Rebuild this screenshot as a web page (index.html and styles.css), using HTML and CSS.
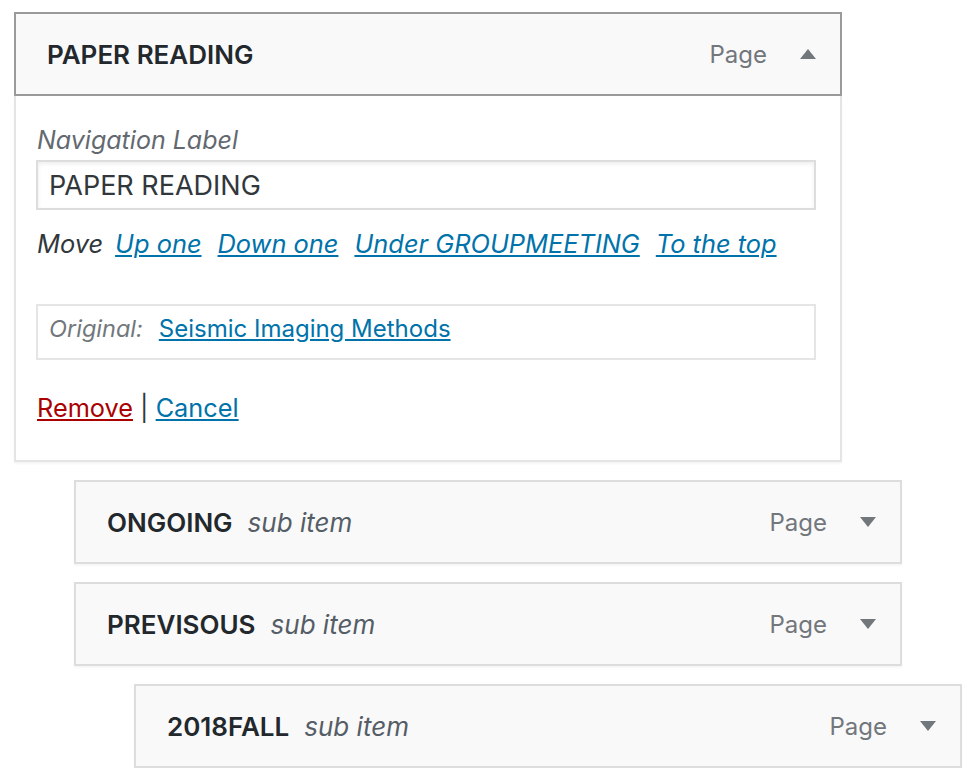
FILE: index.html
```html
<!DOCTYPE html>
<html lang="en">
<head>
<meta charset="utf-8">
<title>Menu structure</title>
<link rel="stylesheet" href="styles.css">
</head>
<body>
<ul class="menu">
  <li class="menu-item depth-0 is-open">
    <div class="item-bar">
      <span class="item-title"><span class="title">PAPER READING</span></span>
      <span class="item-controls">
        <span class="item-type">Page</span>
        <svg class="toggle" width="16" height="10" viewBox="0 0 16 10"><polygon points="0,10 16,10 8,0"/></svg>
      </span>
    </div>
    <div class="settings">
      <label class="field-label">Navigation Label</label>
      <div class="input">PAPER READING</div>
      <p class="field-move">
        <span class="move-label">Move</span>
        <a href="#">Up one</a>
        <a href="#">Down one</a>
        <a href="#">Under GROUPMEETING</a>
        <a href="#">To the top</a>
      </p>
      <div class="original">
        <span class="original-label">Original:</span>
        <a href="#">Seismic Imaging Methods</a>
      </div>
      <p class="actions"><a href="#" class="remove">Remove</a> <span class="sep">|</span> <a href="#">Cancel</a></p>
    </div>
  </li>
  <li class="menu-item depth-1">
    <div class="item-bar light">
      <span class="item-title"><span class="title">ONGOING</span><span class="sub">sub item</span></span>
      <span class="item-controls">
        <span class="item-type">Page</span>
        <svg class="toggle" width="16" height="10" viewBox="0 0 16 10"><polygon points="0,0 16,0 8,10"/></svg>
      </span>
    </div>
  </li>
  <li class="menu-item depth-1">
    <div class="item-bar light">
      <span class="item-title"><span class="title">PREVISOUS</span><span class="sub">sub item</span></span>
      <span class="item-controls">
        <span class="item-type">Page</span>
        <svg class="toggle" width="16" height="10" viewBox="0 0 16 10"><polygon points="0,0 16,0 8,10"/></svg>
      </span>
    </div>
  </li>
  <li class="menu-item depth-2">
    <div class="item-bar light">
      <span class="item-title"><span class="title">2018FALL</span><span class="sub">sub item</span></span>
      <span class="item-controls">
        <span class="item-type">Page</span>
        <svg class="toggle" width="16" height="10" viewBox="0 0 16 10"><polygon points="0,0 16,0 8,10"/></svg>
      </span>
    </div>
  </li>
</ul>
</body>
</html>
```
FILE: styles.css
```css
* { box-sizing: border-box; }
html, body { margin: 0; padding: 0; background: #fff; }
body {
  font-family: Inter, "Noto Sans", "Liberation Sans", sans-serif;
  color: #32373c;
}
.menu {
  list-style: none;
  margin: 0;
  padding: 12px 0 0 14px;
  display: flex;
  flex-direction: column;
  gap: 18px;
}
.menu-item { width: 828px; }
.depth-1 { margin-left: 60px; }
.depth-2 { margin-left: 120px; }

.item-bar {
  height: 84px;
  display: flex;
  align-items: center;
  justify-content: space-between;
  background: #f9f9f9;
  border: 2px solid #9a9a9a;
  padding: 0 24px 0 31px;
}
.item-bar.light {
  border-color: #dddddd;
  box-shadow: 0 2px 2px rgba(0,0,0,.04);
}
.item-title { display: flex; align-items: baseline; }
.title {
  font-size: 26px;
  font-weight: 600;
  color: #23282d;
}
.sub {
  margin-left: 15px;
  font-size: 26px;
  font-style: italic;
  color: #555d66;
}
.item-controls { display: flex; align-items: center; }
.item-type {
  font-size: 24px;
  color: #72777c;
  margin-right: 33px;
}
.toggle { display: block; fill: #72777c; }

.settings {
  border: 2px solid #e5e5e5;
  border-top: none;
  padding: 26px 24px 34px 20px;
  box-shadow: 0 2px 2px rgba(0,0,0,.04);
}
.field-label {
  display: block;
  font-size: 25px;
  line-height: 36px;
  font-style: italic;
  color: #646970;
  margin-left: 1px;
}
.input {
  margin-top: 2px;
  height: 50px;
  border: 2px solid #dddddd;
  box-shadow: inset 0 2px 4px rgba(0,0,0,.07);
  padding: 0 11px;
  display: flex;
  align-items: center;
  font-size: 27px;
  color: #32373c;
}
.field-move {
  margin: 16px 0 0 1px;
  font-size: 25.4px;
  line-height: 36px;
  font-style: italic;
  color: #32373c;
  display: flex;
  gap: 16px;
}
.field-move .move-label { margin-right: -4px; }
a { color: #0073aa; text-decoration: underline; }
.original {
  margin-top: 42px;
  border: 2px solid #e5e5e5;
  padding: 5px 11px 11px;
  font-size: 24px;
  line-height: 36px;
  display: flex;
  gap: 16px;
}
.original-label { font-style: italic; color: #72777c; font-size: 23.5px; }
.actions {
  margin: 30px 0 0 1px;
  font-size: 25.3px;
  line-height: 36px;
}
.actions .remove { color: #a00; }
.sep { color: #32373c; }
```
